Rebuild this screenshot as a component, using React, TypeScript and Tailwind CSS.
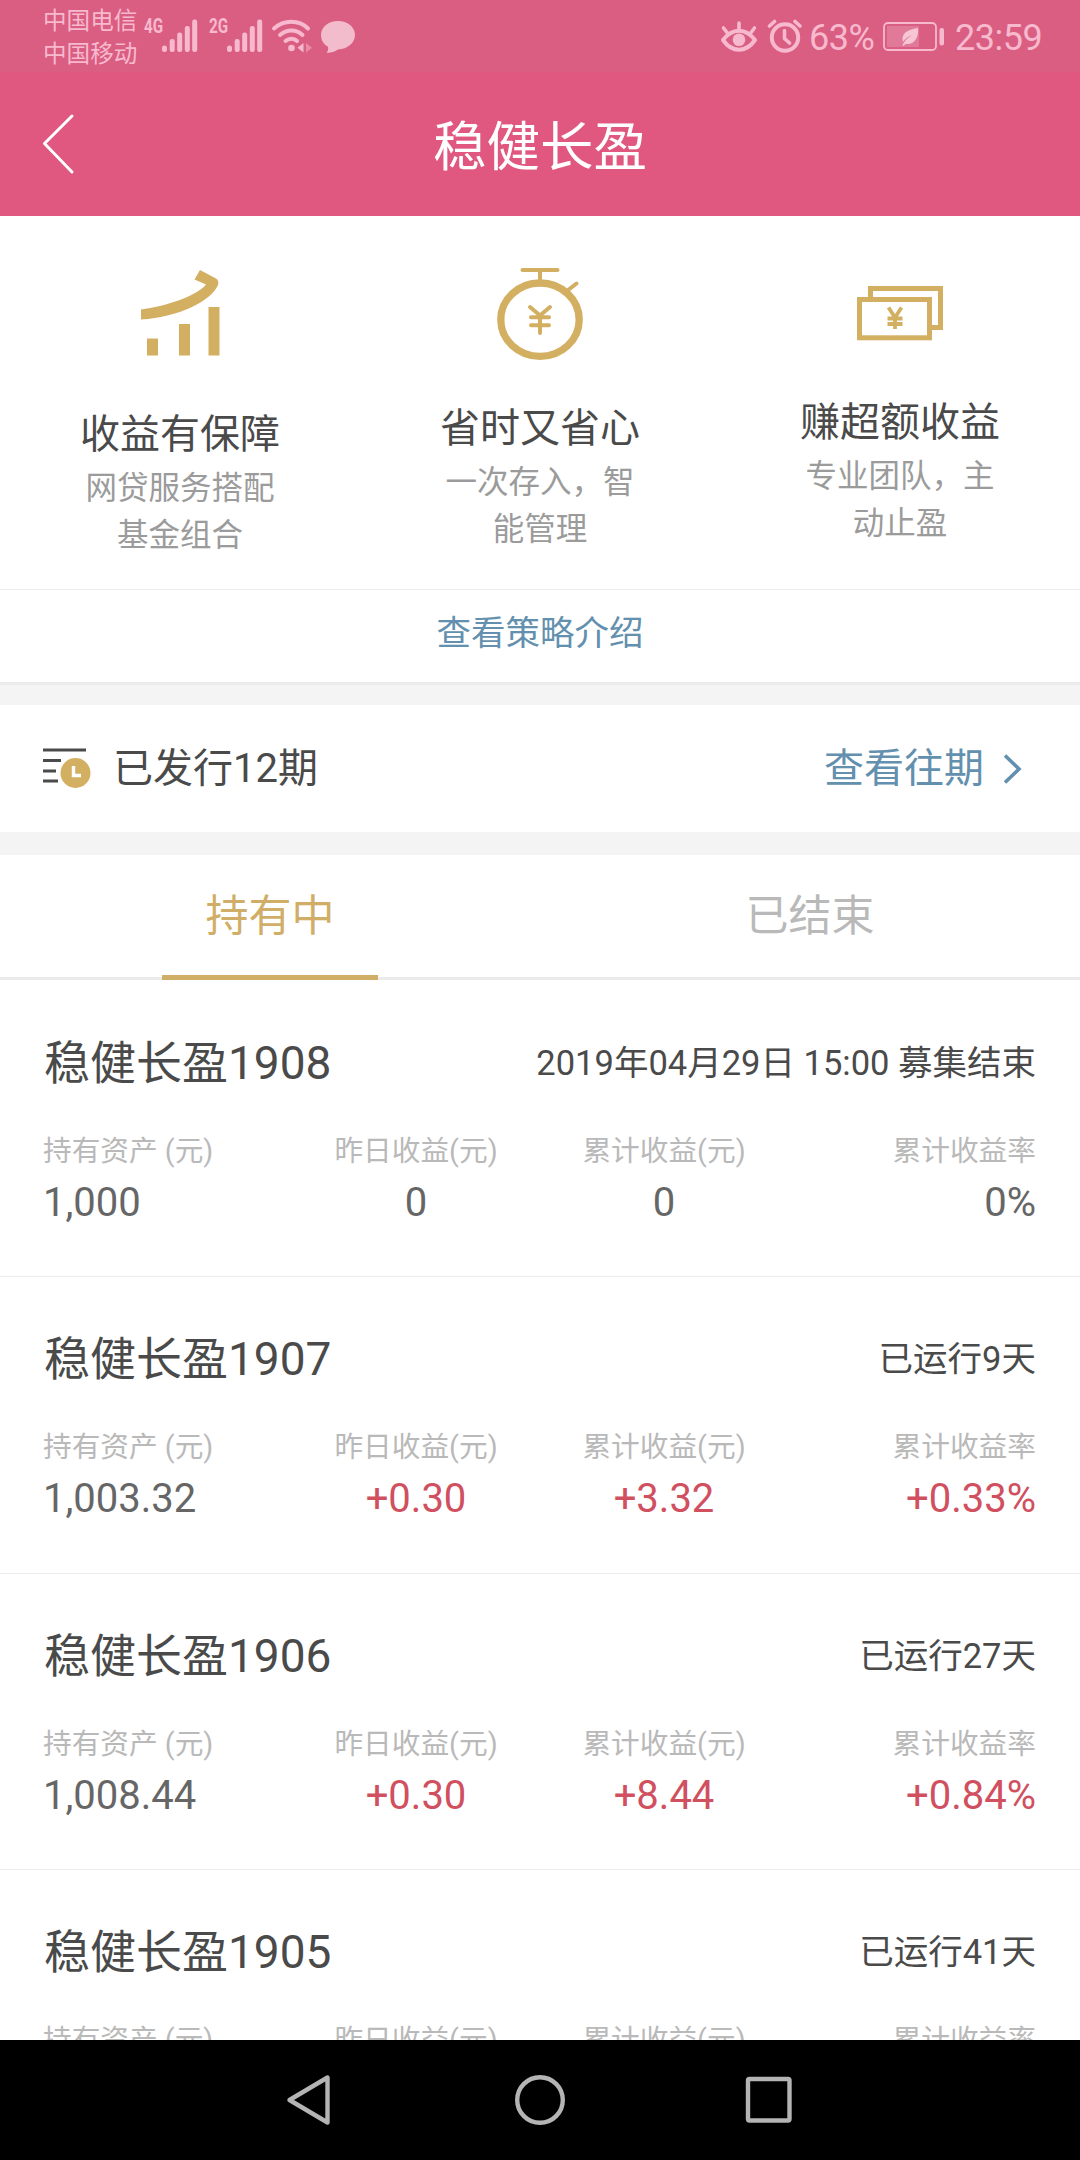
import React from "react";

const GOLD = "#d3af62";
const PINK = "#f7b9ce";

function Signal({ label }: { label: string }) {
  return (
    <div className="relative h-[36px] w-[54px] shrink-0">
      <svg className="h-[36px] w-[54px]" viewBox="0 0 54 36" fill={PINK}>
        <rect x="18" y="27.500" width="5" height="6.500" rx="2.500" />
        <rect x="25.700" y="21" width="5" height="13" rx="2.200" />
        <rect x="33.200" y="14.500" width="5" height="19.500" rx="2.200" />
        <rect x="40.800" y="8" width="5" height="26" rx="2.200" />
        <rect x="48.200" y="1.500" width="5" height="32.500" rx="2.200" />
      </svg>
      <span className="absolute -top-[4px] left-0 origin-left scale-x-[0.760] text-[20px] leading-[25px] font-bold">{label}</span>
    </div>
  );
}

function StatusBar() {
  return (
    <div className="flex h-[72px] shrink-0 items-start bg-[#da5e82] pr-[34px] pl-[43px] text-[#f7b9ce]">
      <div className="w-[101px] pt-[5px] text-[23.600px] leading-[33px] whitespace-nowrap">
        <div>中国电信</div>
        <div>中国移动</div>
      </div>
      <div className="flex pt-[18px]">
        <Signal label="4G" />
        <div className="w-[11px]" />
        <Signal label="2G" />
        <svg className="ml-[8px] h-[36px] w-[42px]" viewBox="0 0 42 36" fill="none" stroke={PINK} strokeWidth="4" strokeLinecap="round">
          <path d="M3 10.500C13 1.500 28 1.500 37 10.500" />
          <path d="M9 17C16 11 25 11 31.500 17" />
          <path d="M14.500 23C18 20 23 20 26 23" />
          <circle cx="20.500" cy="30" r="3.300" fill={PINK} stroke="none" />
          <path d="M32.500 25v9.500l-6-4.800z" fill={PINK} stroke="none" />
          <path d="M35 25v9.500l6-4.800z" fill={PINK} opacity=".5" stroke="none" />
        </svg>
        <svg className="ml-[7px] h-[36px] w-[36px]" viewBox="0 0 36 36" fill="#f2bccd">
          <path d="M18 3C27.500 3 35 9 35 17S27.500 31 18 31.500C14 34.500 10 35 6.500 34.700C8 33 8.500 31 8 28.700C3.500 26 1 22 1 17C1 9 8.500 3 18 3Z" />
        </svg>
      </div>
      <div className="ml-auto flex items-start">
        <svg className="mt-[20px] h-[34px] w-[38px]" viewBox="0 0 38 34" fill="none" stroke={PINK} strokeWidth="4" strokeLinecap="round">
          <path d="M3 20C12 7.500 26 7.500 35 20C26 33 12 33 3 20Z" strokeLinejoin="round" />
          <circle cx="19" cy="19.700" r="6.300" fill={PINK} stroke="none" />
          <path d="M19 3v6M3.500 8l3.500 4.500M34.500 8L31 12.500" strokeWidth="3.600" />
        </svg>
        <svg className="mt-[18px] ml-[9px] h-[36px] w-[36px]" viewBox="0 0 36 36" fill="none" stroke={PINK} strokeWidth="4" strokeLinecap="round">
          <circle cx="18" cy="19.500" r="13.200" />
          <path d="M17.500 12.500v8l5 4.500M2.500 8l5-4.500M33 8l-5-4.500" strokeWidth="3.600" />
        </svg>
        <div className="ml-[6px] w-[66px] pt-[17px] text-[36px] leading-[42px] tracking-[-0.500px] whitespace-nowrap">63%</div>
        <svg className="mt-[21px] ml-[8px] h-[31px] w-[62px]" viewBox="0 0 62 31">
          <rect x="1" y="2" width="52" height="27" rx="4" fill="none" stroke={PINK} strokeWidth="1.800" />
          <rect x="4" y="5" width="32" height="21" fill="#e07a98" />
          <rect x="56.500" y="7" width="4.500" height="17.500" rx="2" fill={PINK} />
          <path d="M35 7C36 17 31 24 22.500 23L20.500 25L19.500 24L21 21.500C23 18 27 15.500 29 14C25 15.500 22 18 20 21C17.500 13 24 8.500 35 7Z" fill="#f6c6d5" />
        </svg>
        <div className="ml-[10px] w-[91px] pt-[17px] text-[36px] leading-[42px] tracking-[-0.500px] whitespace-nowrap">23:59</div>
      </div>
    </div>
  );
}

function GrowthIcon() {
  return (
    <svg className="h-[90px] w-[90px]" viewBox="135 267 90 90" fill={GOLD}>
      <path d="M141 309.500C165 306.500 197 296 206 284.500L194.500 279.500L200 270L216 278.500Q219.500 281 218 285C211 301 180 317 141 319.500Z" />
      <rect x="147" y="338.500" width="11" height="17" />
      <rect x="179" y="324" width="11" height="31.500" />
      <rect x="208.500" y="307" width="11" height="48.500" />
    </svg>
  );
}

function TimerIcon() {
  return (
    <svg className="h-[100px] w-[100px]" viewBox="490 264 100 100" fill="none" stroke={GOLD}>
      <ellipse cx="540" cy="319.700" rx="39.200" ry="36.700" strokeWidth="7.300" />
      <path d="M522.500 270H557.500M540 270V281M567.500 290.500L576.500 283.500M530 307L540 315.500L550 307M540 316V333M531 317.300H549M531 325.300H549" strokeWidth="4" strokeLinecap="round" />
    </svg>
  );
}

function NotesIcon() {
  return (
    <svg className="h-[60px] w-[90px]" viewBox="855 284 90 60" fill="none" stroke={GOLD} strokeWidth="5">
      <path d="M870.500 298V288.500H940.500V327.500H932" />
      <rect x="859.500" y="299.500" width="70" height="38.300" />
      <path d="M888.500 307.500L895 317.500L901.500 307.500M895 317V329M887.500 318.500H902.500M887.500 324H902.500" strokeWidth="3.800" />
    </svg>
  );
}

function Feature({ icon, title, lines, iconBox }: { icon: React.ReactNode; title: string; lines: string[]; iconBox: string }) {
  return (
    <div className="flex flex-1 flex-col items-center text-center">
      <div className={iconBox}>{icon}</div>
      <div className="text-[40px] leading-[56px] text-[#4a4a4a]">{title}</div>
      <div className="mt-[2px] text-[31.500px] leading-[47px] text-[#9b9b9b]">
        {lines.map((line) => (
          <div key={line}>{line}</div>
        ))}
      </div>
    </div>
  );
}

const holdings = [
  { name: "稳健长盈1908", status: "2019年04月29日 15:00 募集结束", values: ["1,000", "0", "0", "0%"], gain: false },
  { name: "稳健长盈1907", status: "已运行9天", values: ["1,003.32", "+0.30", "+3.32", "+0.33%"], gain: true },
  { name: "稳健长盈1906", status: "已运行27天", values: ["1,008.44", "+0.30", "+8.44", "+0.84%"], gain: true },
  { name: "稳健长盈1905", status: "已运行41天", values: ["", "", "", ""], gain: true },
];

const labels = ["持有资产 (元)", "昨日收益(元)", "累计收益(元)", "累计收益率"];
const aligns = ["text-left -ml-px", "text-center", "text-center", "text-right"];

function Holding({ item }: { item: (typeof holdings)[number] }) {
  return (
    <div className="h-[296.250px] shrink-0 border-b border-[#ececec] px-[44px] pt-[50px]">
      <div className="flex h-[64px] items-center justify-between text-[#4a4a4a]">
        <div className="text-[46px] leading-[64px]">{item.name}</div>
        <div className="text-[34.500px] leading-[64px]">{item.status}</div>
      </div>
      <div className="mt-[36px] grid grid-cols-4">
        {labels.map((label, i) => (
          <div key={label} className={aligns[i]}>
            <div className="text-[28.700px] leading-[40px] text-[#b9b9b9]">{label}</div>
            <div className={`mt-[8px] text-[40px] leading-[48px] ${item.gain && i > 0 ? "text-[#d0505f]" : "text-[#666666]"}`}>
              {item.values[i]}
            </div>
          </div>
        ))}
      </div>
    </div>
  );
}

export default function App() {
  return (
    <div className="flex h-[2160px] w-[1080px] flex-col overflow-hidden bg-white font-[Roboto,'Noto_Sans_CJK_SC',sans-serif]">
      <StatusBar />
      <header className="grid h-[144px] shrink-0 grid-cols-[1fr_auto_1fr] items-center bg-[#e0577f] text-white">
        <svg className="ml-[40px] h-[64px] w-[38px]" viewBox="0 0 38 64" fill="none" stroke="white" strokeWidth="3" strokeLinecap="round" strokeLinejoin="round">
          <path d="M32 4L4.500 31.500L32 60" />
        </svg>
        <h1 className="pt-[8px] text-[53.500px] leading-[72px]">稳健长盈</h1>
        <div />
      </header>

      <section className="flex h-[374px] shrink-0 border-b border-[#ececec]">
        <Feature icon={<GrowthIcon />} title="收益有保障" lines={["网贷服务搭配", "基金组合"]} iconBox="h-[191px] pt-[51px]" />
        <Feature icon={<TimerIcon />} title="省时又省心" lines={["一次存入，智", "能管理"]} iconBox="h-[185px] pt-[48px]" />
        <Feature icon={<NotesIcon />} title="赚超额收益" lines={["专业团队，主", "动止盈"]} iconBox="h-[179px] pt-[68px]" />
      </section>

      <div className="flex h-[95px] shrink-0 justify-center border-b-[3px] border-[#ebebeb] pt-[18px] text-[34.500px] leading-[50px] text-[#6390ae]">
        查看策略介绍
      </div>
      <div className="h-[20px] shrink-0 bg-[#f4f4f4]" />

      <div className="flex h-[127px] shrink-0 items-center pr-[58px] pl-[43px] text-[40px]">
        <svg className="mb-[2px] h-[44px] w-[50px]" viewBox="0 0 50 44">
          <path d="M0 4H43M0 14.500H18M0 25H13M0 35H15" stroke="#4a4a4a" strokeWidth="2.800" />
          <circle cx="32.500" cy="27" r="15" fill={GOLD} />
          <path d="M30.500 20V29.500H38" fill="none" stroke="white" strokeWidth="3.400" />
        </svg>
        <span className="ml-[20px] leading-[56px] text-[#4a4a4a]">已发行12期</span>
        <span className="ml-auto leading-[56px] text-[#6390ae]">查看往期</span>
        <svg className="ml-[18px] h-[32px] w-[20px]" viewBox="0 0 20 32" fill="none" stroke="#6390ae" strokeWidth="3.600">
          <path d="M3 2.500L17 16L3 29.500" />
        </svg>
      </div>
      <div className="h-[23px] shrink-0 bg-[#f4f4f4]" />

      <nav className="grid h-[125px] shrink-0 grid-cols-2 border-b-[3px] border-[#ebebeb] text-center text-[43px] leading-[122px]">
        <div className="relative text-[#d0ae68]">
          持有中
          <span className="absolute -bottom-[3px] left-[162px] h-[5px] w-[216px] bg-[#d0ae68]" />
        </div>
        <div className="text-[#b9b9b9]">已结束</div>
      </nav>

      <main className="flex h-[1060px] shrink-0 flex-col overflow-hidden pt-px">
        {holdings.map((item) => (
          <Holding key={item.name} item={item} />
        ))}
      </main>

      <footer className="flex h-[120px] shrink-0 items-center justify-center bg-black">
        <svg className="h-[60px] w-[520px]" viewBox="280 30 520 60" fill="none" stroke="#b4b4b4" strokeWidth="4.400" strokeLinejoin="round">
          <path d="M327.500 37.500V82.500L289.500 60Z" />
          <circle cx="540" cy="60" r="22.800" />
          <rect x="748" y="39" width="41.500" height="41.500" rx="1.500" />
        </svg>
      </footer>
    </div>
  );
}
